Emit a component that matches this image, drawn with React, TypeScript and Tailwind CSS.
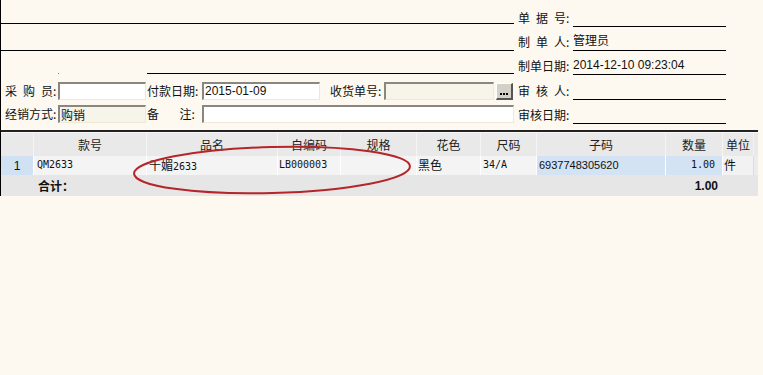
import React from "react";

const cjk = "font-['Noto_Sans_CJK_SC','Noto_Sans',sans-serif]";
const mono = "font-['DejaVu_Sans_Mono','Liberation_Mono',monospace]";
const sans = "font-['Liberation_Sans','Noto_Sans_CJK_SC',sans-serif]";

const cols = [
  { key: "no", title: "", w: "w-[33px]" },
  { key: "kh", title: "款号", w: "w-[113px]" },
  { key: "pm", title: "品名", w: "w-[131px]" },
  { key: "zbm", title: "自编码", w: "w-[63px]" },
  { key: "gg", title: "规格", w: "w-[76px]" },
  { key: "hs", title: "花色", w: "w-[64px]" },
  { key: "cm", title: "尺码", w: "w-[56px]" },
  { key: "zm", title: "子码", w: "w-[129px]" },
  { key: "sl", title: "数量", w: "w-[57px]" },
  { key: "dw", title: "单位", w: "w-[31px]" },
];

function Field({ label, value }: { label: string; value?: string }) {
  return (
    <div className="flex items-end">
      <div className={`w-[59px] pl-[4px] text-[12px] leading-[14px] pb-[2px] whitespace-pre ${cjk}`}>{label}</div>
      <div className={`w-[153px] h-full border-b border-black flex items-end pb-[2px] text-[12px] leading-[14px] ${sans}`}>
        {value}
      </div>
    </div>
  );
}

function Input({ w, value, cream, mono: m }: { w: string; value?: string; cream?: boolean; mono?: boolean }) {
  return (
    <div
      className={`${w} h-[18px] border-t-2 border-l-2 border-t-[#8a8780] border-l-[#8a8780] border-b border-r border-b-[#ece9d8] border-r-[#ece9d8] ${
        cream ? "bg-[#f7f4e9]" : "bg-white"
      } text-[12px] leading-[15px] pl-[1px] ${m ? sans : cjk} whitespace-nowrap overflow-hidden`}
    >
      {value}
    </div>
  );
}

export default function App() {
  return (
    <div className="relative w-[763px] h-[375px] bg-[#fdf9f0] text-[#111] overflow-hidden">
      {/* top form */}
      <div className="flex h-[130px] border-l border-black">
        <div className="w-[513px] flex flex-col">
          <div className="h-[24px] border-b border-black" />
          <div className="h-[27px] border-b border-black" />
          <div className="h-[23px] flex items-end">
            <div className="w-[146px] h-full relative">
              <div className="absolute left-[57px] bottom-[0px] w-[1px] h-[1px] bg-[#888]" />
            </div>
            <div className="flex-1 h-full border-b border-black" />
          </div>
          <div className="mt-[8px] flex items-center h-[18px]">
            <div className={`w-[57px] pl-[4px] text-[12px] whitespace-pre ${cjk}`}>{"采\u2002购\u2002员:"}</div>
            <Input w="w-[88px]" />
            <div className={`w-[56px] pl-[1px] text-[12px] ${cjk}`}>付款日期:</div>
            <Input w="w-[118px]" value="2015-01-09" mono />
            <div className={`w-[64px] pl-[10px] text-[12px] ${cjk}`}>收货单号:</div>
            <Input w="w-[110px]" cream />
            <div className="ml-[2px] w-[17px] h-[17px] bg-[#d4d0c8] border-t border-l border-t-white border-l-white border-b-2 border-r-2 border-b-[#555] border-r-[#555] flex items-end justify-center gap-[1px] pb-[3px]">
              <span className="w-[2px] h-[2px] bg-black" />
              <span className="w-[2px] h-[2px] bg-black" />
              <span className="w-[2px] h-[2px] bg-black" />
            </div>
          </div>
          <div className="mt-[5px] flex items-center h-[18px]">
            <div className={`w-[57px] pl-[4px] text-[12px] whitespace-pre ${cjk}`}>经销方式:</div>
            <Input w="w-[88px]" value="购销" cream />
            <div className={`w-[56px] pl-[1px] text-[12px] whitespace-pre ${cjk}`}>{"备\u2003\u2002\u2009注:"}</div>
            <Input w="w-[312px]" />
          </div>
        </div>
        <div className="flex flex-col">
          <div className="h-[27px] flex">
            <Field label={"单\u2002据\u2002号:"} />
          </div>
          <div className="h-[24px] flex">
            <Field label={"制\u2002单\u2002人:"} value="管理员" />
          </div>
          <div className="h-[24px] flex">
            <Field label="制单日期:" value="2014-12-10 09:23:04" />
          </div>
          <div className="h-[25px] flex">
            <Field label={"审\u2002核\u2002人:"} />
          </div>
          <div className="h-[24px] flex">
            <Field label="审核日期:" />
          </div>
        </div>
      </div>

      {/* grid */}
      <div className="border-t-2 border-[#222] border-l border-l-black w-[758px]">
        <div className="flex h-[24px] bg-[#e9e9e9] border-t border-t-[#f8f8f8]">
          {cols.map((c) => (
            <div
              key={c.key}
              className={`${c.w} shrink-0 border-r border-[#f4f4f4] flex items-center justify-center text-[12px] text-[#222] ${cjk}`}
            >
              {c.title}
            </div>
          ))}
          <div className="flex-1" />
        </div>
        <div className="flex h-[19px] bg-[#f4f4f4]">
          <div className={`w-[33px] shrink-0 bg-[#cfe1f2] border-r border-white flex items-center justify-center text-[12px] ${sans}`}>1</div>
          <div className={`w-[113px] shrink-0 bg-[#f4f4f4] border-r border-white pl-[3px] text-[10px] leading-[18px] ${mono}`}>QM2633</div>
          <div className={`w-[131px] shrink-0 bg-[#f4f4f4] border-r border-white pl-[2px] text-[12px] leading-[18px] ${cjk}`}>
            千媚<span className={`${mono} text-[10px]`}>2633</span>
          </div>
          <div className={`w-[63px] shrink-0 bg-[#f4f4f4] border-r border-white pl-[1px] text-[10px] leading-[18px] ${mono}`}>LB000003</div>
          <div className="w-[76px] shrink-0 bg-[#f4f4f4] border-r border-white" />
          <div className={`w-[64px] shrink-0 bg-[#f4f4f4] border-r border-white pl-[1px] text-[12px] leading-[18px] ${cjk}`}>黑色</div>
          <div className={`w-[56px] shrink-0 bg-[#f4f4f4] border-r border-white pl-[2px] text-[10px] leading-[18px] ${mono}`}>34/A</div>
          <div className={`w-[129px] shrink-0 bg-[#d3e3f3] border-r border-white pl-[2px] text-[11px] leading-[18px] ${sans}`}>6937748305620</div>
          <div className={`w-[57px] shrink-0 bg-[#d3e3f3] border-r border-white pr-[7px] text-right text-[10px] leading-[18px] ${mono}`}>1.00</div>
          <div className={`w-[31px] shrink-0 bg-[#f2f2f2] border-r border-[#dcdcdc] pl-[1px] text-[12px] leading-[18px] ${cjk}`}>件</div>
          <div className="flex-1 bg-[#ececec]" />
        </div>
        <div className="flex h-[21px] bg-[#e6e6e6] items-center">
          <div className="w-[33px] shrink-0" />
          <div className={`w-[113px] shrink-0 pl-[4px] text-[12px] font-bold ${cjk}`}>合计：</div>
          <div className="w-[519px] shrink-0" />
          <div className={`w-[57px] shrink-0 pr-[5px] text-right text-[12px] font-bold ${sans}`}>1.00</div>
          <div className="flex-1" />
        </div>
      </div>

      {/* red annotation ellipse */}
      <svg className="absolute left-0 top-0 pointer-events-none" width="763" height="375">
        <ellipse cx="272" cy="170" rx="138" ry="23" fill="none" stroke="#b3262b" strokeWidth="2" transform="rotate(-1.5 272 170)" />
      </svg>
    </div>
  );
}
